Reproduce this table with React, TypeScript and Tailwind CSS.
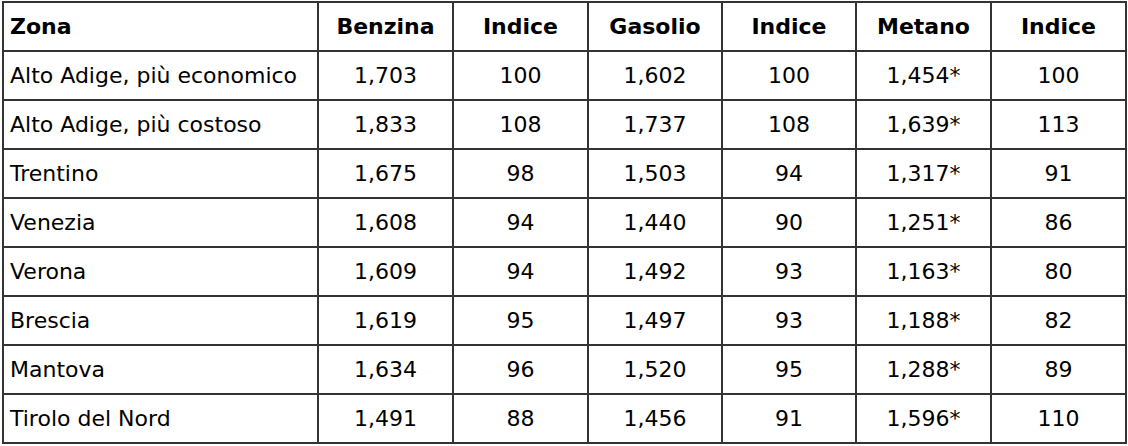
import React from "react";

const rows: string[][] = [
  ["Alto Adige, più economico", "1,703", "100", "1,602", "100", "1,454*", "100"],
  ["Alto Adige, più costoso", "1,833", "108", "1,737", "108", "1,639*", "113"],
  ["Trentino", "1,675", "98", "1,503", "94", "1,317*", "91"],
  ["Venezia", "1,608", "94", "1,440", "90", "1,251*", "86"],
  ["Verona", "1,609", "94", "1,492", "93", "1,163*", "80"],
  ["Brescia", "1,619", "95", "1,497", "93", "1,188*", "82"],
  ["Mantova", "1,634", "96", "1,520", "95", "1,288*", "89"],
  ["Tirolo del Nord", "1,491", "88", "1,456", "91", "1,596*", "110"],
];

const head = ["Zona", "Benzina", "Indice", "Gasolio", "Indice", "Metano", "Indice"];
const widths = ["w-[315px]", "w-[135px]", "w-[135px]", "w-[134px]", "w-[134px]", "w-[135px]", "w-[135px]"];

export default function App() {
  return (
    <div className="bg-white w-[1128px] h-[446px] pt-[1px] pl-[2px] text-black [font-family:'DejaVu_Sans',sans-serif]">
      <table className="border-collapse table-fixed w-[1123px]">
        <thead>
          <tr className="h-[49px]">
            {head.map((h, i) => (
              <th
                key={i}
                className={`${widths[i]} border-2 border-[#333] font-bold text-[22px] ${i === 0 ? "text-left pl-[6px]" : "text-center"}`}
              >
                {h}
              </th>
            ))}
          </tr>
        </thead>
        <tbody>
          {rows.map((r, ri) => (
            <tr key={ri} className="h-[49px]">
              {r.map((c, ci) => (
                <td
                  key={ci}
                  className={`border-2 border-[#333] text-[22px] ${ci === 0 ? "text-left pl-[6px]" : "text-center"}`}
                >
                  {c}
                </td>
              ))}
            </tr>
          ))}
        </tbody>
      </table>
    </div>
  );
}
